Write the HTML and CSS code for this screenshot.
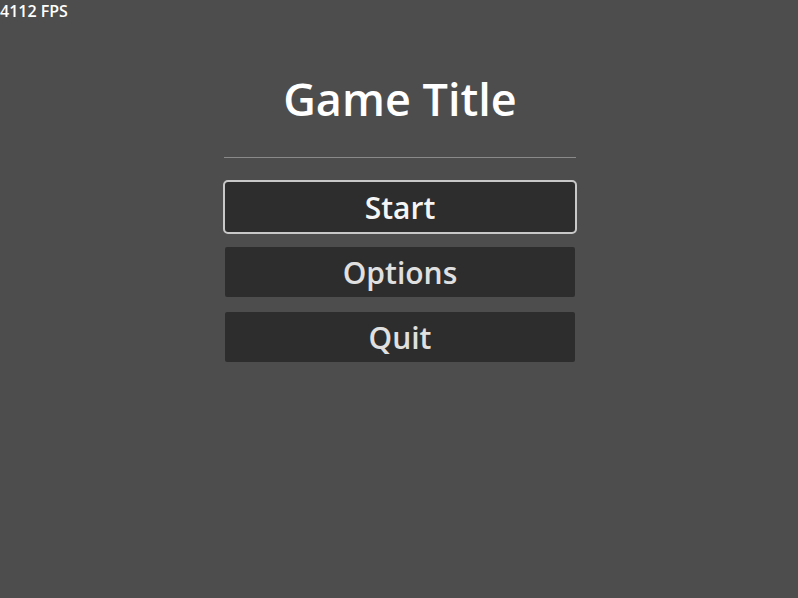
FILE: index.html
```html
<!DOCTYPE html>
<html>
<head>
<meta charset="utf-8">
<link rel="stylesheet" href="styles.css">
</head>
<body>
<div class="fps">4112 FPS</div>
<main class="menu">
  <h1 class="title">Game Title</h1>
  <hr class="sep">
  <div class="buttons">
    <button class="btn focused">Start</button>
    <button class="btn">Options</button>
    <button class="btn">Quit</button>
  </div>
</main>
</body>
</html>
```
FILE: styles.css
```css
html, body {
  margin: 0;
  padding: 0;
  width: 798px;
  height: 598px;
  background: #4d4d4d;
  font-family: "Open Sans", "Noto Sans", sans-serif;
  overflow: hidden;
}
.fps {
  position: absolute;
  left: 0;
  top: 0;
  color: #ffffff;
  font-size: 16px;
  font-weight: 600;
  line-height: 22px;
}
.menu {
  display: flex;
  flex-direction: column;
  align-items: center;
  padding-top: 69px;
  padding-left: 2px;
}
.title {
  margin: 0;
  color: #ffffff;
  font-size: 45px;
  font-weight: 600;
  line-height: 60px;
}
.sep {
  width: 352px;
  margin: 28px 0 0 0;
  border: none;
  border-top: 1px solid #8a8a8a;
  height: 0;
}
.buttons {
  display: flex;
  flex-direction: column;
  gap: 15px;
  margin-top: 24px;
}
.btn {
  width: 350px;
  height: 50px;
  background: #2d2d2d;
  border: none;
  border-radius: 2px;
  color: #e0e0e0;
  font-family: "Open Sans", "Noto Sans", sans-serif;
  font-size: 30px;
  font-weight: 600;
  padding: 2px 0 0 0;
  line-height: 48px;
}
.btn.focused {
  color: #f5f5f5;
  outline: 2px solid #c8c8c8;
  outline-offset: 0;
  border-radius: 3px;
}
```
